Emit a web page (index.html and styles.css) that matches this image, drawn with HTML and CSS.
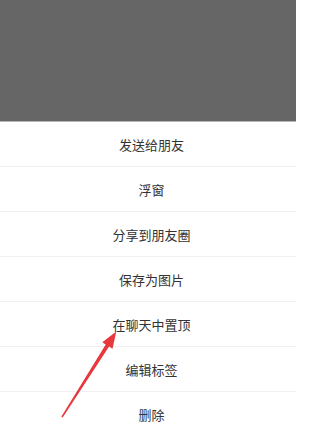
FILE: index.html
```html
<!DOCTYPE html>
<html lang="zh">
<head>
<meta charset="utf-8">
<title>菜单</title>
<link rel="stylesheet" href="styles.css">
</head>
<body>
<div class="page">
  <div class="mask"></div>
  <ul class="menu">
    <li class="item">发送给朋友</li>
    <li class="item">浮窗</li>
    <li class="item">分享到朋友圈</li>
    <li class="item">保存为图片</li>
    <li class="item">在聊天中置顶</li>
    <li class="item">编辑标签</li>
    <li class="item">删除</li>
  </ul>
  <svg class="arrow" width="296" height="429" viewBox="0 0 296 429">
    <polygon points="61.3,416.8 105.7,344.4 102.3,342.3 116.3,331.5 112.5,348.7 109.1,346.6 62.7,417.4" fill="#e8383d"/>
  </svg>
</div>
</body>
</html>
```

FILE: styles.css
```css
html, body {
  margin: 0;
  padding: 0;
  background: #ffffff;
}
.page {
  position: relative;
  width: 296px;
  height: 429px;
  overflow: hidden;
  font-family: "Noto Sans CJK SC", "Noto Sans", sans-serif;
}
.mask {
  height: 121px;
  background: #666666;
  border-bottom: 1px solid #b5b5b5;
}
.menu {
  list-style: none;
  margin: 0;
  padding: 0;
}
.item {
  height: 44px;
  border-bottom: 1px solid #f0f0f0;
  display: flex;
  align-items: center;
  justify-content: center;
  padding-left: 7px;
  font-size: 13px;
  color: #333333;
}
.arrow {
  position: absolute;
  left: 0;
  top: 0;
}
```
